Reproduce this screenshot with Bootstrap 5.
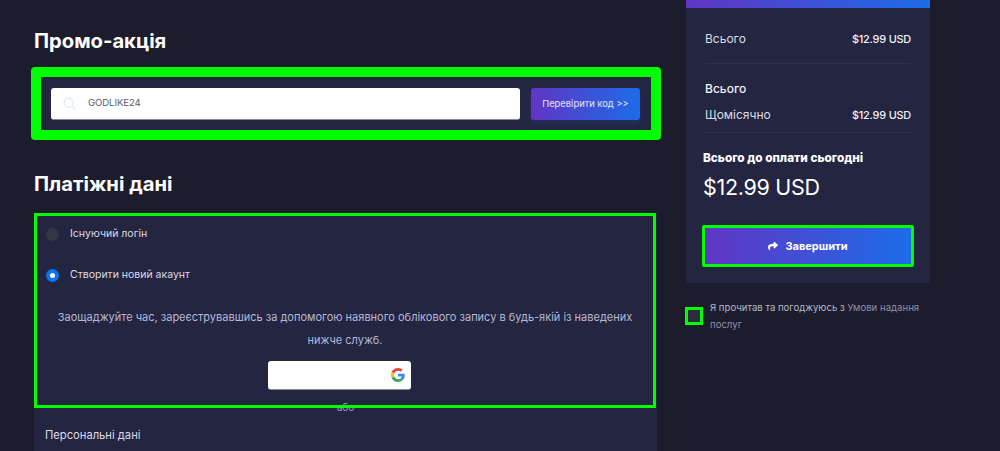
<!DOCTYPE html>
<html lang="uk">
<head>
  <meta charset="UTF-8" />
  <title>Оформлення замовлення</title>
  <link href="https://cdn.jsdelivr.net/npm/bootstrap@5.3.0/dist/css/bootstrap.min.css" rel="stylesheet" />
  <style>
    html, body { height: 451px; overflow: hidden; }
    body { background: #1c1c2c; font-family: "Inter", "Noto Sans", sans-serif; color: #fff; }
    .page-wrap { padding-left: 34px; gap: 29px; }
    .left-col { width: 623px; flex: none; }
    .right-col { width: 244px; flex: none; }
    .sec-title { font-size: 20.2px; font-weight: 700; line-height: 26px; margin: 0; }
    .promo-title { padding-top: 28px; margin-bottom: 13px; }
    .promo-box { background: #242540; border: 10px solid #00ff00; border-radius: 4px; margin: 0 -4px 0 -3px; padding: 11px 11px 10px 10px; gap: 11px; height: 73px; }
    .promo-field { background: #fff; border-radius: 3px; height: 32px; width: 469px; padding-left: 12px; gap: 12px; border-bottom: 1px solid #8a8a96; }
    .promo-field span { font-size: 9.6px; color: #5c5c68; letter-spacing: -.1px; }
    .grad-btn { background: linear-gradient(90deg, #6135c4, #1c6ce8); color: #e6e6fa; border: 0; border-radius: 3px; }
    .check-btn { width: 109px; height: 32px; font-size: 9.4px; padding: 0; box-shadow: 0 3px 6px rgba(28, 108, 232, .2); }
    .pay-title { margin-top: 31px; margin-bottom: 16px; }
    .pay-panel { background: #242540; }
    .login-box { border: 3.5px solid #00ff00; height: 195px; width: 622px; position: relative; z-index: 1; margin-bottom: -6px; }
    .radio-row { gap: 11px; font-size: 10.5px; color: #dcdce8; height: 20px; padding-left: 9px; }
    .radio-row.first-row { margin-top: 8px; margin-bottom: 21px; }
    .radio-dot { width: 13px; height: 13px; border-radius: 50%; background: #343548; flex: none; }
    .radio-dot.checked { background: #fff; border: 4px solid #0a75f0; }
    .login-note { font-size: 11px; line-height: 23px; color: #b6b8d6; text-align: center; margin: 21px 0 9px; }
    .google-btn { background: #fff; width: 143px; height: 29px; border-radius: 3px; border-bottom: 1px solid #8a8a96; padding-right: 6px; margin-left: 231px; }
    .or-text { font-size: 10px; line-height: 10px; color: #9a9cb8; text-align: center; height: 10px; margin-bottom: 15px; }
    .personal-title { font-size: 11.2px; color: #dcdce8; padding-left: 11px; height: 40px; }
    .top-bar { height: 8px; background: linear-gradient(90deg, #6135c4, #1c6ce8); }
    .sum-card { background: #242540; border-radius: 0 0 3px 3px; padding: 0 19px 16px 19px; height: 275px; }
    .sum-row { font-size: 12px; line-height: 16px; color: #dcdce8; }
    .sum-row b { font-size: 10.9px; font-weight: 500; color: #f2f2f8; letter-spacing: -.2px; }
    .row-total { padding: 23px 0 16px; }
    .row-head { padding-top: 17px; }
    .row-monthly { padding: 10px 0 9px; }
    .row-head b { font-size: 12px; letter-spacing: 0; }
    .sum-line { border-top: 1px solid #303150; }
    .pay-label { font-size: 11.8px; font-weight: 800; margin: 18px 0 0 -2px; line-height: 14px; white-space: nowrap; }
    .pay-total { font-size: 21.5px; font-weight: 400; line-height: 26px; margin: 9px 0 0 -2px; letter-spacing: -.3px; }
    .finish-btn { height: 42px; width: 212px; margin: 25px 0 0 -3px; border: 3px solid #00ff00; border-radius: 2px; font-size: 11px; font-weight: 700; color: #fff; gap: 7px; }
    .terms-row { margin-top: 16px; gap: 7px; }
    .terms-check { width: 18px; height: 18px; border: 3px solid #00ff00; flex: none; margin-top: 8px; margin-left: -1px; background: #2b2c3c; }
    .terms-text { font-size: 9.6px; line-height: 17px; color: #b6b8c8; }
    .terms-text span { color: #8f90ae; }
  </style>
</head>
<body>
  <div class="d-flex page-wrap">
    <div class="left-col">
      <h2 class="sec-title promo-title">Промо-акція</h2>
      <div class="promo-box d-flex align-items-start">
        <div class="promo-field d-flex align-items-center">
          <svg width="13" height="13" viewBox="0 0 16 16" fill="none" stroke="#dfe8fa" stroke-width="1.6"><circle cx="7" cy="7" r="5.6"/><path d="M11.2 11.2 15 15"/></svg>
          <span>GODLIKE24</span>
        </div>
        <button class="grad-btn check-btn" type="button">Перевірити код &gt;&gt;</button>
      </div>

      <h2 class="sec-title pay-title">Платіжні дані</h2>
      <div class="pay-panel">
        <div class="login-box">
          <div class="radio-row first-row d-flex align-items-center"><i class="radio-dot"></i>Існуючий логін</div>
          <div class="radio-row d-flex align-items-center"><i class="radio-dot checked"></i>Створити новий акаунт</div>
          <p class="login-note">Заощаджуйте час, зареєструвавшись за допомогою наявного облікового запису в будь-якій із наведених<br>нижче служб.</p>
          <div class="google-btn d-flex align-items-center justify-content-end">
            <svg width="14" height="14" viewBox="0 0 48 48"><path fill="#EA4335" d="M24 9.5c3.5 0 6.7 1.2 9.2 3.6l6.9-6.9C35.9 2.4 30.5 0 24 0 14.6 0 6.5 5.4 2.6 13.2l8 6.2C12.4 13.7 17.7 9.5 24 9.5z"/><path fill="#4285F4" d="M46.98 24.55c0-1.57-.15-3.09-.38-4.55H24v9.02h12.94c-.58 2.96-2.26 5.48-4.78 7.18l7.73 6c4.51-4.18 7.09-10.36 7.09-17.65z"/><path fill="#FBBC05" d="M10.53 28.59A14.5 14.5 0 0 1 9.77 24c0-1.6.27-3.14.76-4.59l-7.98-6.19A23.9 23.9 0 0 0 0 24c0 3.88.92 7.54 2.56 10.78l7.97-6.19z"/><path fill="#34A853" d="M24 48c6.48 0 11.93-2.13 15.89-5.81l-7.73-6c-2.15 1.45-4.92 2.3-8.16 2.3-6.26 0-11.57-4.22-13.47-9.91l-7.98 6.19C6.51 42.62 14.62 48 24 48z"/></svg>
          </div>
        </div>
        <div class="or-text">або</div>
        <div class="personal-title">Персональні дані</div>
      </div>
    </div>

    <div class="right-col">
      <div class="top-bar"></div>
      <div class="sum-card">
        <div class="sum-row row-total d-flex justify-content-between"><span>Всього</span><b>$12.99 USD</b></div>
        <div class="sum-line"></div>
        <div class="sum-row row-head"><b>Всього</b></div>
        <div class="sum-row row-monthly d-flex justify-content-between"><span>Щомісячно</span><b>$12.99 USD</b></div>
        <div class="sum-line"></div>
        <div class="pay-label">Всього до оплати сьогодні</div>
        <div class="pay-total">$12.99 USD</div>
        <button class="grad-btn finish-btn d-flex align-items-center justify-content-center" type="button">
          <svg width="10" height="10" viewBox="0 0 512 512" fill="#fff"><path d="M503.7 189.8L327.7 37.9C312.3 24.6 288 35.4 288 56v80.1C127.4 137.9 0 170.1 0 322.3c0 61.4 39.6 122.3 83.3 154.1 13.7 10 33.1-2.5 28.1-18.6C66 312.4 125 274.4 288 272v88c0 20.7 24.3 31.4 39.7 18.2l176-152c11.1-9.6 11.1-26.8 0-36.4z"/></svg>
          Завершити
        </button>
      </div>
      <div class="terms-row d-flex">
        <div class="terms-check"></div>
        <div class="terms-text">Я прочитав та погоджуюсь з <span>Умови надання</span><br><span>послуг</span></div>
      </div>
    </div>
  </div>
</body>
</html>
